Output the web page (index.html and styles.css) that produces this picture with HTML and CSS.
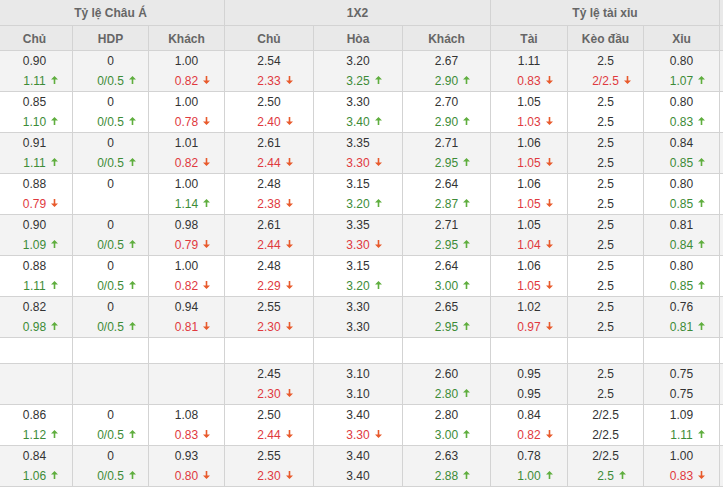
FILE: index.html
```html
<!DOCTYPE html>
<html lang="vi">
<head>
<meta charset="utf-8">
<title>Tỷ lệ kèo</title>
<link rel="stylesheet" href="styles.css">
</head>
<body>
<svg width="0" height="0" class="defs">
  <defs>
    <symbol id="up" viewBox="0 0 7 8"><path d="M3.5 0 L7 3.6 H4.3 V8 H2.7 V3.6 H0 Z"/></symbol>
    <symbol id="down" viewBox="0 0 7 8"><path d="M3.5 8 L7 4.4 H4.3 V0 H2.7 V4.4 H0 Z"/></symbol>
  </defs>
</svg>
<div class="wrap">
  <div class="row head1">
    <div class="h span3">Tỷ lệ Châu Á</div>
    <div class="h span3">1X2</div>
    <div class="h span3">Tỷ lệ tài xỉu</div>
    <div class="h"></div>
  </div>
  <div class="row head2">
    <div class="h">Chủ</div><div class="h">HDP</div><div class="h">Khách</div>
    <div class="h">Chủ</div><div class="h">Hòa</div><div class="h">Khách</div>
    <div class="h">Tài</div><div class="h">Kèo đầu</div><div class="h">Xỉu</div>
    <div class="h"></div>
  </div>

  <div class="row data alt">
    <div class="c"><span>0.90</span><span class="g">1.11<svg class="ar up"><use href="#up"/></svg></span></div>
    <div class="c"><span>0</span><span class="g">0/0.5<svg class="ar up"><use href="#up"/></svg></span></div>
    <div class="c"><span>1.00</span><span class="r">0.82<svg class="ar dn"><use href="#down"/></svg></span></div>
    <div class="c"><span>2.54</span><span class="r">2.33<svg class="ar dn"><use href="#down"/></svg></span></div>
    <div class="c"><span>3.20</span><span class="g">3.25<svg class="ar up"><use href="#up"/></svg></span></div>
    <div class="c"><span>2.67</span><span class="g">2.90<svg class="ar up"><use href="#up"/></svg></span></div>
    <div class="c"><span>1.11</span><span class="r">0.83<svg class="ar dn"><use href="#down"/></svg></span></div>
    <div class="c"><span>2.5</span><span class="r">2/2.5<svg class="ar dn"><use href="#down"/></svg></span></div>
    <div class="c"><span>0.80</span><span class="g">1.07<svg class="ar up"><use href="#up"/></svg></span></div>
    <div class="c"></div>
  </div>

  <div class="row data">
    <div class="c"><span>0.85</span><span class="g">1.10<svg class="ar up"><use href="#up"/></svg></span></div>
    <div class="c"><span>0</span><span class="g">0/0.5<svg class="ar up"><use href="#up"/></svg></span></div>
    <div class="c"><span>1.00</span><span class="r">0.78<svg class="ar dn"><use href="#down"/></svg></span></div>
    <div class="c"><span>2.50</span><span class="r">2.40<svg class="ar dn"><use href="#down"/></svg></span></div>
    <div class="c"><span>3.30</span><span class="g">3.40<svg class="ar up"><use href="#up"/></svg></span></div>
    <div class="c"><span>2.70</span><span class="g">2.90<svg class="ar up"><use href="#up"/></svg></span></div>
    <div class="c"><span>1.05</span><span class="r">1.03<svg class="ar dn"><use href="#down"/></svg></span></div>
    <div class="c"><span>2.5</span><span>2.5</span></div>
    <div class="c"><span>0.80</span><span class="g">0.83<svg class="ar up"><use href="#up"/></svg></span></div>
    <div class="c"></div>
  </div>

  <div class="row data alt">
    <div class="c"><span>0.91</span><span class="g">1.11<svg class="ar up"><use href="#up"/></svg></span></div>
    <div class="c"><span>0</span><span class="g">0/0.5<svg class="ar up"><use href="#up"/></svg></span></div>
    <div class="c"><span>1.01</span><span class="r">0.82<svg class="ar dn"><use href="#down"/></svg></span></div>
    <div class="c"><span>2.61</span><span class="r">2.44<svg class="ar dn"><use href="#down"/></svg></span></div>
    <div class="c"><span>3.35</span><span class="r">3.30<svg class="ar dn"><use href="#down"/></svg></span></div>
    <div class="c"><span>2.71</span><span class="g">2.95<svg class="ar up"><use href="#up"/></svg></span></div>
    <div class="c"><span>1.06</span><span class="r">1.05<svg class="ar dn"><use href="#down"/></svg></span></div>
    <div class="c"><span>2.5</span><span>2.5</span></div>
    <div class="c"><span>0.84</span><span class="g">0.85<svg class="ar up"><use href="#up"/></svg></span></div>
    <div class="c"></div>
  </div>

  <div class="row data">
    <div class="c"><span>0.88</span><span class="r">0.79<svg class="ar dn"><use href="#down"/></svg></span></div>
    <div class="c"><span>0</span><span></span></div>
    <div class="c"><span>1.00</span><span class="g">1.14<svg class="ar up"><use href="#up"/></svg></span></div>
    <div class="c"><span>2.48</span><span class="r">2.38<svg class="ar dn"><use href="#down"/></svg></span></div>
    <div class="c"><span>3.15</span><span class="g">3.20<svg class="ar up"><use href="#up"/></svg></span></div>
    <div class="c"><span>2.64</span><span class="g">2.87<svg class="ar up"><use href="#up"/></svg></span></div>
    <div class="c"><span>1.06</span><span class="r">1.05<svg class="ar dn"><use href="#down"/></svg></span></div>
    <div class="c"><span>2.5</span><span>2.5</span></div>
    <div class="c"><span>0.80</span><span class="g">0.85<svg class="ar up"><use href="#up"/></svg></span></div>
    <div class="c"></div>
  </div>

  <div class="row data alt">
    <div class="c"><span>0.90</span><span class="g">1.09<svg class="ar up"><use href="#up"/></svg></span></div>
    <div class="c"><span>0</span><span class="g">0/0.5<svg class="ar up"><use href="#up"/></svg></span></div>
    <div class="c"><span>0.98</span><span class="r">0.79<svg class="ar dn"><use href="#down"/></svg></span></div>
    <div class="c"><span>2.61</span><span class="r">2.44<svg class="ar dn"><use href="#down"/></svg></span></div>
    <div class="c"><span>3.35</span><span class="r">3.30<svg class="ar dn"><use href="#down"/></svg></span></div>
    <div class="c"><span>2.71</span><span class="g">2.95<svg class="ar up"><use href="#up"/></svg></span></div>
    <div class="c"><span>1.05</span><span class="r">1.04<svg class="ar dn"><use href="#down"/></svg></span></div>
    <div class="c"><span>2.5</span><span>2.5</span></div>
    <div class="c"><span>0.81</span><span class="g">0.84<svg class="ar up"><use href="#up"/></svg></span></div>
    <div class="c"></div>
  </div>

  <div class="row data">
    <div class="c"><span>0.88</span><span class="g">1.11<svg class="ar up"><use href="#up"/></svg></span></div>
    <div class="c"><span>0</span><span class="g">0/0.5<svg class="ar up"><use href="#up"/></svg></span></div>
    <div class="c"><span>1.00</span><span class="r">0.82<svg class="ar dn"><use href="#down"/></svg></span></div>
    <div class="c"><span>2.48</span><span class="r">2.29<svg class="ar dn"><use href="#down"/></svg></span></div>
    <div class="c"><span>3.15</span><span class="g">3.20<svg class="ar up"><use href="#up"/></svg></span></div>
    <div class="c"><span>2.64</span><span class="g">3.00<svg class="ar up"><use href="#up"/></svg></span></div>
    <div class="c"><span>1.06</span><span class="r">1.05<svg class="ar dn"><use href="#down"/></svg></span></div>
    <div class="c"><span>2.5</span><span>2.5</span></div>
    <div class="c"><span>0.80</span><span class="g">0.85<svg class="ar up"><use href="#up"/></svg></span></div>
    <div class="c"></div>
  </div>

  <div class="row data alt">
    <div class="c"><span>0.82</span><span class="g">0.98<svg class="ar up"><use href="#up"/></svg></span></div>
    <div class="c"><span>0</span><span class="g">0/0.5<svg class="ar up"><use href="#up"/></svg></span></div>
    <div class="c"><span>0.94</span><span class="r">0.81<svg class="ar dn"><use href="#down"/></svg></span></div>
    <div class="c"><span>2.55</span><span class="r">2.30<svg class="ar dn"><use href="#down"/></svg></span></div>
    <div class="c"><span>3.30</span><span>3.30</span></div>
    <div class="c"><span>2.65</span><span class="g">2.95<svg class="ar up"><use href="#up"/></svg></span></div>
    <div class="c"><span>1.02</span><span class="r">0.97<svg class="ar dn"><use href="#down"/></svg></span></div>
    <div class="c"><span>2.5</span><span>2.5</span></div>
    <div class="c"><span>0.76</span><span class="g">0.81<svg class="ar up"><use href="#up"/></svg></span></div>
    <div class="c"></div>
  </div>

  <div class="row empty">
    <div class="c"></div><div class="c"></div><div class="c"></div>
    <div class="c"></div><div class="c"></div><div class="c"></div>
    <div class="c"></div><div class="c"></div><div class="c"></div>
    <div class="c"></div>
  </div>

  <div class="row data alt">
    <div class="c"></div>
    <div class="c"></div>
    <div class="c"></div>
    <div class="c"><span>2.45</span><span class="r">2.30<svg class="ar dn"><use href="#down"/></svg></span></div>
    <div class="c"><span>3.10</span><span>3.10</span></div>
    <div class="c"><span>2.60</span><span class="g">2.80<svg class="ar up"><use href="#up"/></svg></span></div>
    <div class="c"><span>0.95</span><span>0.95</span></div>
    <div class="c"><span>2.5</span><span>2.5</span></div>
    <div class="c"><span>0.75</span><span>0.75</span></div>
    <div class="c"></div>
  </div>

  <div class="row data">
    <div class="c"><span>0.86</span><span class="g">1.12<svg class="ar up"><use href="#up"/></svg></span></div>
    <div class="c"><span>0</span><span class="g">0/0.5<svg class="ar up"><use href="#up"/></svg></span></div>
    <div class="c"><span>1.08</span><span class="r">0.83<svg class="ar dn"><use href="#down"/></svg></span></div>
    <div class="c"><span>2.50</span><span class="r">2.44<svg class="ar dn"><use href="#down"/></svg></span></div>
    <div class="c"><span>3.40</span><span class="r">3.30<svg class="ar dn"><use href="#down"/></svg></span></div>
    <div class="c"><span>2.80</span><span class="g">3.00<svg class="ar up"><use href="#up"/></svg></span></div>
    <div class="c"><span>0.84</span><span class="r">0.82<svg class="ar dn"><use href="#down"/></svg></span></div>
    <div class="c"><span>2/2.5</span><span>2/2.5</span></div>
    <div class="c"><span>1.09</span><span class="g">1.11<svg class="ar up"><use href="#up"/></svg></span></div>
    <div class="c"></div>
  </div>

  <div class="row data alt">
    <div class="c"><span>0.84</span><span class="g">1.06<svg class="ar up"><use href="#up"/></svg></span></div>
    <div class="c"><span>0</span><span class="g">0/0.5<svg class="ar up"><use href="#up"/></svg></span></div>
    <div class="c"><span>0.93</span><span class="r">0.80<svg class="ar dn"><use href="#down"/></svg></span></div>
    <div class="c"><span>2.55</span><span class="r">2.30<svg class="ar dn"><use href="#down"/></svg></span></div>
    <div class="c"><span>3.40</span><span>3.40</span></div>
    <div class="c"><span>2.63</span><span class="g">2.88<svg class="ar up"><use href="#up"/></svg></span></div>
    <div class="c"><span>0.78</span><span class="g">1.00<svg class="ar up"><use href="#up"/></svg></span></div>
    <div class="c"><span>2/2.5</span><span class="g">2.5<svg class="ar up"><use href="#up"/></svg></span></div>
    <div class="c"><span>1.00</span><span class="r">0.83<svg class="ar dn"><use href="#down"/></svg></span></div>
    <div class="c"></div>
  </div>
</div>
</body>
</html>
```

FILE: styles.css
```css
html, body {
  margin: 0;
  padding: 0;
  background: #ffffff;
  overflow: hidden;
}

body {
  font-family: "Liberation Sans", Arial, sans-serif;
  font-size: 12px;
  color: #333333;
}

.defs {
  position: absolute;
  width: 0;
  height: 0;
}

.wrap {
  margin-left: -3px;
  width: 740px;
  display: flex;
  flex-direction: column;
}

.row {
  display: grid;
  grid-template-columns: 76px 76px 76px 89px 89px 88px 77px 76px 76px 17px;
}

.row > div {
  box-sizing: border-box;
  border-right: 1px solid #d3d3d3;
  border-bottom: 1px solid #d3d3d3;
}

.head1,
.head2 {
  background: #e9e9e9;
}

.head1 { height: 26px; }
.head2 { height: 25px; }

.h {
  display: flex;
  align-items: center;
  justify-content: center;
  font-weight: bold;
  color: #666666;
  padding-top: 1px;
}

.span3 {
  grid-column: span 3;
}

.data { height: 41px; }
.empty { height: 26px; background: #ffffff; }

.alt { background: #f3f3f3; }

.c {
  display: flex;
  flex-direction: column;
  align-items: center;
  line-height: 20px;
}

.c span {
  display: block;
  height: 20px;
  white-space: nowrap;
}

.g { color: #3d8b37; }
.r { color: #e0393e; }

.ar {
  display: inline-block;
  width: 7px;
  height: 8px;
  margin-left: 5px;
  margin-right: -12px;
  vertical-align: 1px;
}

.ar.up { fill: #5fae3e; }
.ar.dn { fill: #e85a2c; }
```
